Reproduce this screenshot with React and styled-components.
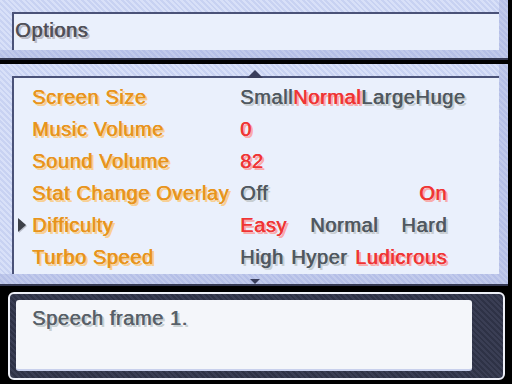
import React from "react";
import styled, { createGlobalStyle, css } from "styled-components";

const GlobalStyle = createGlobalStyle`
  html, body {
    margin: 0;
    padding: 0;
    background: #000;
    overflow: hidden;
  }
`;

const pixelText = css`
  font-family: "Liberation Sans", Arial, sans-serif;
  font-size: 20px;
  letter-spacing: 0.6px;
  line-height: 32px;
  white-space: nowrap;
`;

//글자 두께를 픽셀 폰트처럼 보이게 + 오른쪽 아래 그림자
const shadow = (fg, sh) => `0.6px 0 0 ${fg}, 2px 2px 0 ${sh}, 2.6px 2px 0 ${sh}`;

const tones = {
  label: { fg: "#e8941c", sh: "#f8d094" },
  on: { fg: "#f03434", sh: "#f8acac" },
  off: { fg: "#505860", sh: "#c8ced2" },
};

const Screen = styled.div`
  width: 512px;
  height: 384px;
  background: #000;
  display: flex;
  flex-direction: column;
`;

//창 테두리 (연한 파란 줄무늬 + 오른쪽/아래 그림자 띠)
const Frame = styled.div`
  position: relative;
  box-sizing: border-box;
  width: 508px;
  padding: 12px 9px ${({ bottom }) => bottom}px 12px;
  background: repeating-linear-gradient(
    45deg,
    #d8e0f8 0 2px,
    #c8d2f2 2px 4px
  );
  box-shadow: inset -9px -${({ bottom }) => bottom}px 0 rgba(120, 134, 196, 0.24);
  border-bottom: 2px solid #343852;
  margin-bottom: ${({ gap }) => gap || 0}px;
`;

const Panel = styled.div`
  box-sizing: border-box;
  height: ${({ h }) => h}px;
  background: #eaf0fc;
  border-top: 2px solid #4a5278;
  border-left: 2px solid #4a5278;
  padding: ${({ pad }) => pad};
`;

const Title = styled.div`
  ${pixelText}
  color: #505058;
  text-shadow: ${shadow("#505058", "#bcbcc6")};
`;

const Row = styled.div`
  position: relative;
  display: grid;
  grid-template-columns: 208px 207px;
  height: 32px;
`;

const Label = styled.div`
  ${pixelText}
  color: ${tones.label.fg};
  text-shadow: ${shadow(tones.label.fg, tones.label.sh)};
`;

const Values = styled.div`
  display: flex;
  justify-content: space-between;
`;

const Value = styled.span`
  ${pixelText}
  flex-shrink: 0;
  color: ${({ active }) => (active ? tones.on.fg : tones.off.fg)};
  text-shadow: ${({ active }) =>
    active ? shadow(tones.on.fg, tones.on.sh) : shadow(tones.off.fg, tones.off.sh)};
`;

const Cursor = styled.span`
  position: absolute;
  left: -14px;
  top: 9px;
  width: 0;
  height: 0;
  border-top: 7px solid transparent;
  border-bottom: 7px solid transparent;
  border-left: 8px solid #3c4048;
  filter: drop-shadow(1px 1px 0 #b8bcc8);
`;

const ScrollArrow = styled.span`
  position: absolute;
  left: ${({ x }) => x}px;
  top: ${({ y }) => y}px;
  width: 0;
  height: 0;
  border-left: ${({ size }) => size}px solid transparent;
  border-right: ${({ size }) => size}px solid transparent;
  ${({ down, size }) =>
    down
      ? `border-top: ${size}px solid #3a3e5c;`
      : `border-bottom: ${size}px solid #3a3e5c;`}
`;

//대화창 (어두운 테두리 + 흰 외곽선)
const Speech = styled.div`
  box-sizing: border-box;
  width: 497px;
  height: 88px;
  margin: 6px 0 0 8px;
  padding: 6px 31px 7px 6px;
  border: 2px solid #eef0f8;
  border-radius: 6px;
  background: repeating-linear-gradient(
    45deg,
    #2e3246 0 2px,
    #3a3e54 2px 4px
  );
`;

const SpeechPanel = styled.div`
  box-sizing: border-box;
  height: 100%;
  background: #f4f6fa;
  border-radius: 3px;
  border-bottom: 2px solid #c8d0ec;
  padding: 2px 16px;
`;

const SpeechText = styled.div`
  ${pixelText}
  color: #586068;
  text-shadow: ${shadow("#586068", "#c8d0d2")};
`;

const options = [
  { label: "Screen Size", values: ["Small", "Normal", "Large", "Huge"], selected: 1 },
  { label: "Music Volume", values: ["0"], selected: 0 },
  { label: "Sound Volume", values: ["82"], selected: 0 },
  { label: "Stat Change Overlay", values: ["Off", "On"], selected: 1 },
  { label: "Difficulty", values: ["Easy", "Normal", "Hard"], selected: 0 },
  { label: "Turbo Speed", values: ["High", "Hyper", "Ludicrous"], selected: 2 },
];

const cursorIndex = 4;

export default function App() {
  return (
    <Screen>
      <GlobalStyle />
      <Frame bottom={8} gap={4}>
        <Panel h={38} pad="0 0 0 1px">
          <Title>Options</Title>
        </Panel>
      </Frame>

      <Frame bottom={10}>
        <ScrollArrow x={247} y={6} size={8} />
        <Panel h={198} pad="3px 0 0 18px">
          {options.map((opt, i) => (
            <Row key={opt.label}>
              {i === cursorIndex && <Cursor />}
              <Label>{opt.label}</Label>
              <Values>
                {opt.values.map((v, j) => (
                  <Value key={v} active={j === opt.selected}>
                    {v}
                  </Value>
                ))}
              </Values>
            </Row>
          ))}
        </Panel>
        <ScrollArrow x={250} y={215} size={5} down />
      </Frame>

      <Speech>
        <SpeechPanel>
          <SpeechText>Speech frame 1.</SpeechText>
        </SpeechPanel>
      </Speech>
    </Screen>
  );
}
